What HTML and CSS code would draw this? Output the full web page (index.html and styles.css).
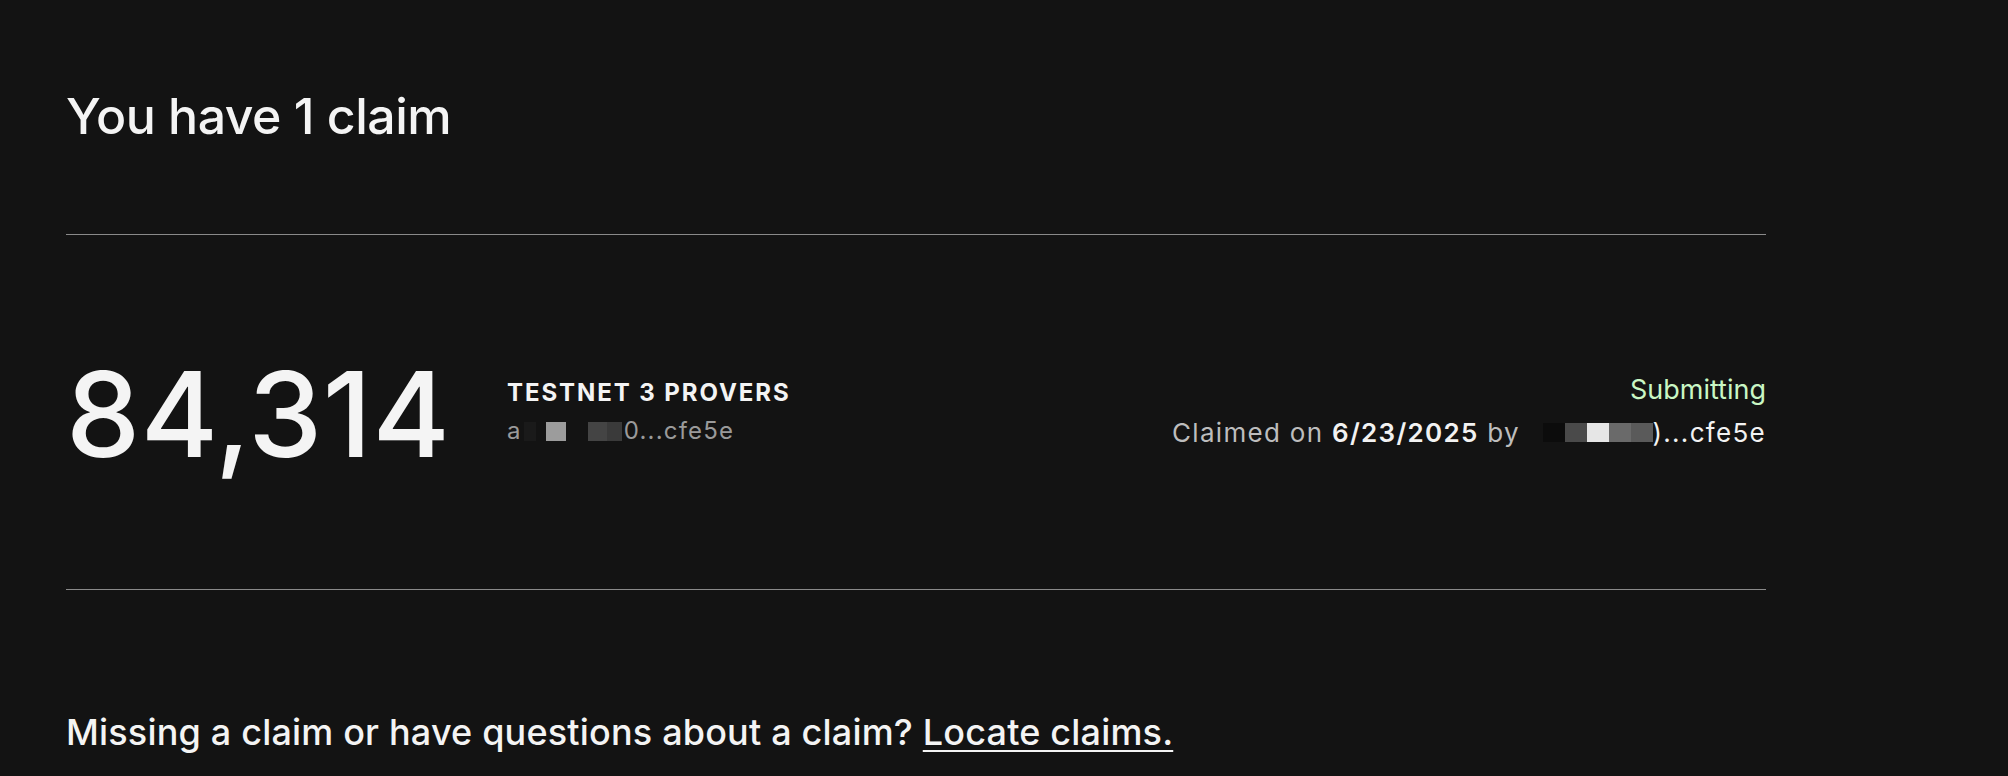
FILE: index.html
```html
<html>
<head>
<title>Claims</title>
<link rel="stylesheet" href="styles.css">
</head>
<body>
<div class="page">
  <h1 class="title">You have 1 claim</h1>
  <div class="claims">
    <div class="claim">
      <div class="amount">84,314</div>
      <div class="info">
        <div class="label">TESTNET 3 PROVERS</div>
        <div class="addr">a<span class="px px-a"></span><span class="px px-b"></span><span class="px px-c"></span><span class="px px-d"></span>0...cfe5e</div>
      </div>
      <div class="status">
        <div class="state">Submitting</div>
        <div class="claimed">Claimed on <b>6/23/2025</b> by <span class="px px-e"></span><span class="px px-f"></span><span class="px px-g"></span><span class="px px-h"></span><span class="px px-i"></span><span class="hl">)...cfe5e</span></div>
      </div>
    </div>
  </div>
  <p class="help">Missing a claim or have questions about a claim? <a href="#">Locate claims.</a></p>
</div>
</body>
</html>
```

FILE: styles.css
```css
*
{
    margin: 0;
    padding: 0;
}
html, body
{
    background: #131313;
    color: #f4f4f4;
    font-family: Inter, "Noto Sans", sans-serif;
}
body
{
    overflow: hidden;
}
.page
{
    width: 1700px;
    padding: 86px 0 0 66px;
}
.title
{
    font-size: 50px;
    font-weight: 500;
    letter-spacing: -0.01em;
    line-height: 60px;
}
.claims
{
    margin-top: 88px;
    border-top: 1px solid #8a8a8a;
    border-bottom: 1px solid #8a8a8a;
}
.claim
{
    display: flex;
    align-items: center;
    height: 354px;
}
.amount
{
    font-size: 118px;
    font-weight: 500;
    letter-spacing: 0.005em;
    line-height: 1;
    width: 441px;
    margin-top: 4px;
}
.info
{
    display: flex;
    flex-direction: column;
    gap: 10px;
    margin-top: 0;
}
.label
{
    font-size: 24px;
    font-weight: 700;
    letter-spacing: 0.08em;
    line-height: 28px;
}
.addr
{
    font-size: 24px;
    color: #9a9a9a;
    letter-spacing: 0.05em;
    line-height: 28px;
    display: flex;
    align-items: center;
}
.px
{
    display: inline-block;
    height: 19px;
}
.px-a { width: 12px; background: #1a1a1a; margin-left: 2px; }
.px-b { width: 20px; background: #9c9c9c; margin-left: 10px; }
.px-c { width: 19px; background: #444; margin-left: 22px; }
.px-d { width: 15px; background: #3a3a3a; margin-right: 2px; }
.status
{
    margin-left: auto;
    text-align: right;
    display: flex;
    flex-direction: column;
    align-items: flex-end;
    gap: 11px;
    margin-top: -2px;
}
.state
{
    color: #c9f7c4;
    font-size: 27px;
    line-height: 32px;
}
.claimed
{
    font-size: 26px;
    line-height: 32px;
    color: #bdbdbd;
    letter-spacing: 0.05em;
    display: flex;
    align-items: center;
    white-space: pre;
}
.claimed b
{
    color: #f2f2f2;
    font-weight: 600;
}
.claimed .hl
{
    color: #f2f2f2;
}
.px-e { width: 22px; background: #0c0c0c; margin-left: 14px; }
.px-f { width: 22px; background: #4a4a4a; }
.px-g { width: 22px; background: #e6e6e6; }
.px-h { width: 22px; background: #6a6a6a; }
.px-i { width: 22px; background: #5a5a5a; }
.help
{
    margin-top: 120px;
    font-size: 36px;
    font-weight: 500;
    letter-spacing: 0.005em;
}
.help a
{
    color: #f4f4f4;
    text-decoration: underline;
    text-underline-offset: 5px;
    text-decoration-thickness: 2px;
}
```
